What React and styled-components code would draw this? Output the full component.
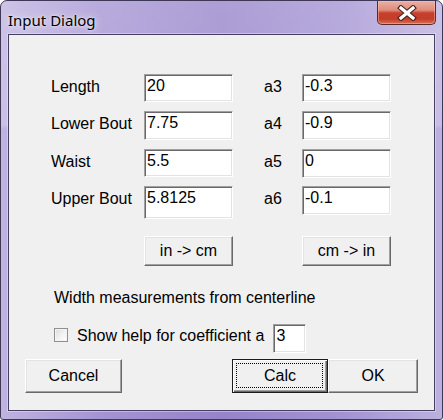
import React from "react";
import styled, { createGlobalStyle, css } from "styled-components";

const GlobalStyle = createGlobalStyle`
  html, body { margin: 0; padding: 0; background: #ffffff; }
  body { font-family: "Liberation Sans", Arial, sans-serif; }
  * { box-sizing: border-box; }
`;

const Window = styled.div`
  width: 443px;
  height: 420px;
  display: flex;
  flex-direction: column;
  border: 1px solid #3d3856;
  border-radius: 7px 7px 3px 3px;
  padding: 0 7px 8px 7px;
  background:
    linear-gradient(180deg, rgba(255,255,255,0.22) 0px, rgba(255,255,255,0.18) 124px, rgba(255,255,255,0) 128px),
    linear-gradient(90deg, #bfb3e0 0%, #a594d3 22%, #9683c9 50%, #a393d3 78%, #bcb0df 100%);
  overflow: hidden;
`;

const TitleBar = styled.div`
  height: 33px;
  display: flex;
  align-items: flex-start;
  justify-content: space-between;
  flex: none;
`;

const Title = styled.div`
  padding-top: 5px;
  line-height: 28px;
  font-family: "Noto Sans", "Liberation Sans", sans-serif;
  font-size: 15px;
  color: #000;
  text-shadow: 0 0 8px rgba(255,255,255,0.9), 0 0 3px rgba(255,255,255,0.8);
`;

const CloseButton = styled.button`
  width: 59px;
  height: 24px;
  margin: 0 -1px 0 0;
  padding: 0;
  border: 1px solid #5a2a2a;
  border-top: none;
  border-radius: 0 0 5px 5px;
  background: linear-gradient(180deg, #eab0a3 0%, #df8b79 40%, #c7402d 52%, #c43c2a 78%, #d8714f 100%);
  box-shadow: inset 0 0 0 1px rgba(255, 200, 190, 0.45);
  display: flex;
  align-items: center;
  justify-content: center;
`;

const Client = styled.div`
  flex: 1;
  display: flex;
  flex-direction: column;
  background: #f0f0f0;
  border: 1px solid #463f63;
  box-shadow: 0 0 0 1px rgba(255,255,255,0.35);
  padding: 39px 16px 0 16px;
`;

const FieldGrid = styled.div`
  display: grid;
  grid-template-columns: 93px 89px 69px 89px;
  grid-template-rows: 28px 29px 28px 33px 38px;
  row-gap: 9px;
  margin-left: 26px;
`;

const Label = styled.div`
  align-self: start;
  font-size: 16px;
  line-height: 26px;
  color: #000;
  padding-left: ${(p) => (p.$indent ? "31px" : "0")};
  white-space: nowrap;
`;

const Field = styled.div`
  align-self: start;
  height: ${(p) => p.$h || 28}px;
  width: ${(p) => p.$w || 89}px;
  background: #fff;
  border: 1px solid;
  border-color: #a0a0a0 #ffffff #ffffff #a0a0a0;
  box-shadow: inset 1px 1px 0 #696969, inset -1px -1px 0 #e3e3e3;
  padding: 0 0 0 2px;
  font-size: 16px;
  line-height: 22px;
  color: #000;
  white-space: nowrap;
  overflow: hidden;
`;

const raised = css`
  border: 1px solid;
  border-color: #ffffff #696969 #696969 #ffffff;
  box-shadow: inset -1px -1px 0 #a0a0a0, inset 1px 1px 0 #e3e3e3;
`;

const Button = styled.button`
  position: relative;
  width: ${(p) => p.$w}px;
  height: ${(p) => p.$h}px;
  margin: 0;
  padding: 0;
  background: #f0f0f0;
  font-family: "Liberation Sans", Arial, sans-serif;
  font-size: 16px;
  color: #000;
  display: flex;
  align-items: center;
  justify-content: center;
  ${raised}
  ${(p) =>
    p.$default &&
    css`
      border: 1px solid #1c1c1c;
      box-shadow: inset 1px 1px 0 #ffffff, inset -1px -1px 0 #696969, inset -2px -2px 0 #a0a0a0;
      &::after {
        content: "";
        position: absolute;
        inset: 3px 4px 4px 3px;
        border: 1px dotted #000;
      }
    `}
`;

const ConvertButton = styled(Button)`
  align-self: end;
`;

const Note = styled.div`
  margin-top: 22px;
  margin-left: 29px;
  font-size: 16px;
  line-height: 20px;
  color: #000;
`;

const CheckRow = styled.div`
  margin-top: 16px;
  margin-left: 29px;
  height: 29px;
  display: flex;
  align-items: flex-start;
`;

const CheckBox = styled.span`
  width: 14px;
  height: 14px;
  margin-top: 4px;
  margin-right: 9px;
  border: 1px solid #8f8f8f;
  background: linear-gradient(135deg, #dcdcdc 0%, #f4f4f4 60%, #ffffff 100%);
  box-shadow: inset 0 0 0 1px #f4f4f4;
`;

const CheckLabel = styled.span`
  margin-top: 2px;
  margin-right: 9px;
  font-size: 16px;
  line-height: 20px;
  color: #000;
  white-space: nowrap;
`;

const ButtonRow = styled.div`
  margin-top: 6px;
  display: flex;
`;

const Spacer = styled.div`
  flex: 1;
`;

function CloseGlyph() {
  return (
    <svg width="20" height="16" viewBox="0 0 20 16">
      <path d="M4 3 L16 13 M16 3 L4 13" stroke="#4a2323" strokeWidth="5.5" strokeLinecap="square" fill="none" />
      <path d="M4 3 L16 13 M16 3 L4 13" stroke="#ffffff" strokeWidth="3.2" strokeLinecap="square" fill="none" />
    </svg>
  );
}

const rows = [
  { label: "Length", value: "20", a: "a3", av: "-0.3", h: 28, ah: 28 },
  { label: "Lower Bout", value: "7.75", a: "a4", av: "-0.9", h: 29, ah: 29 },
  { label: "Waist", value: "5.5", a: "a5", av: "0", h: 28, ah: 29 },
  { label: "Upper Bout", value: "5.8125", a: "a6", av: "-0.1", h: 33, ah: 29 },
];

export default function App() {
  return (
    <>
      <GlobalStyle />
      <Window>
        <TitleBar>
          <Title>Input Dialog</Title>
          <CloseButton aria-label="Close">
            <CloseGlyph />
          </CloseButton>
        </TitleBar>
        <Client>
          <FieldGrid>
            {rows.map((r) => (
              <React.Fragment key={r.label}>
                <Label>{r.label}</Label>
                <Field $h={r.h}>{r.value}</Field>
                <Label $indent>{r.a}</Label>
                <Field $h={r.ah}>{r.av}</Field>
              </React.Fragment>
            ))}
            <span />
            <ConvertButton $w={89} $h={30}>in -&gt; cm</ConvertButton>
            <span />
            <ConvertButton $w={89} $h={30}>cm -&gt; in</ConvertButton>
          </FieldGrid>
          <Note>Width measurements from centerline</Note>
          <CheckRow>
            <CheckBox />
            <CheckLabel>Show help for coefficient a</CheckLabel>
            <Field $w={33} $h={29}>3</Field>
          </CheckRow>
          <ButtonRow>
            <Button $w={97} $h={34}>Cancel</Button>
            <Spacer />
            <Button $w={96} $h={34} $default>Calc</Button>
            <Button $w={90} $h={34}>OK</Button>
          </ButtonRow>
        </Client>
      </Window>
    </>
  );
}
